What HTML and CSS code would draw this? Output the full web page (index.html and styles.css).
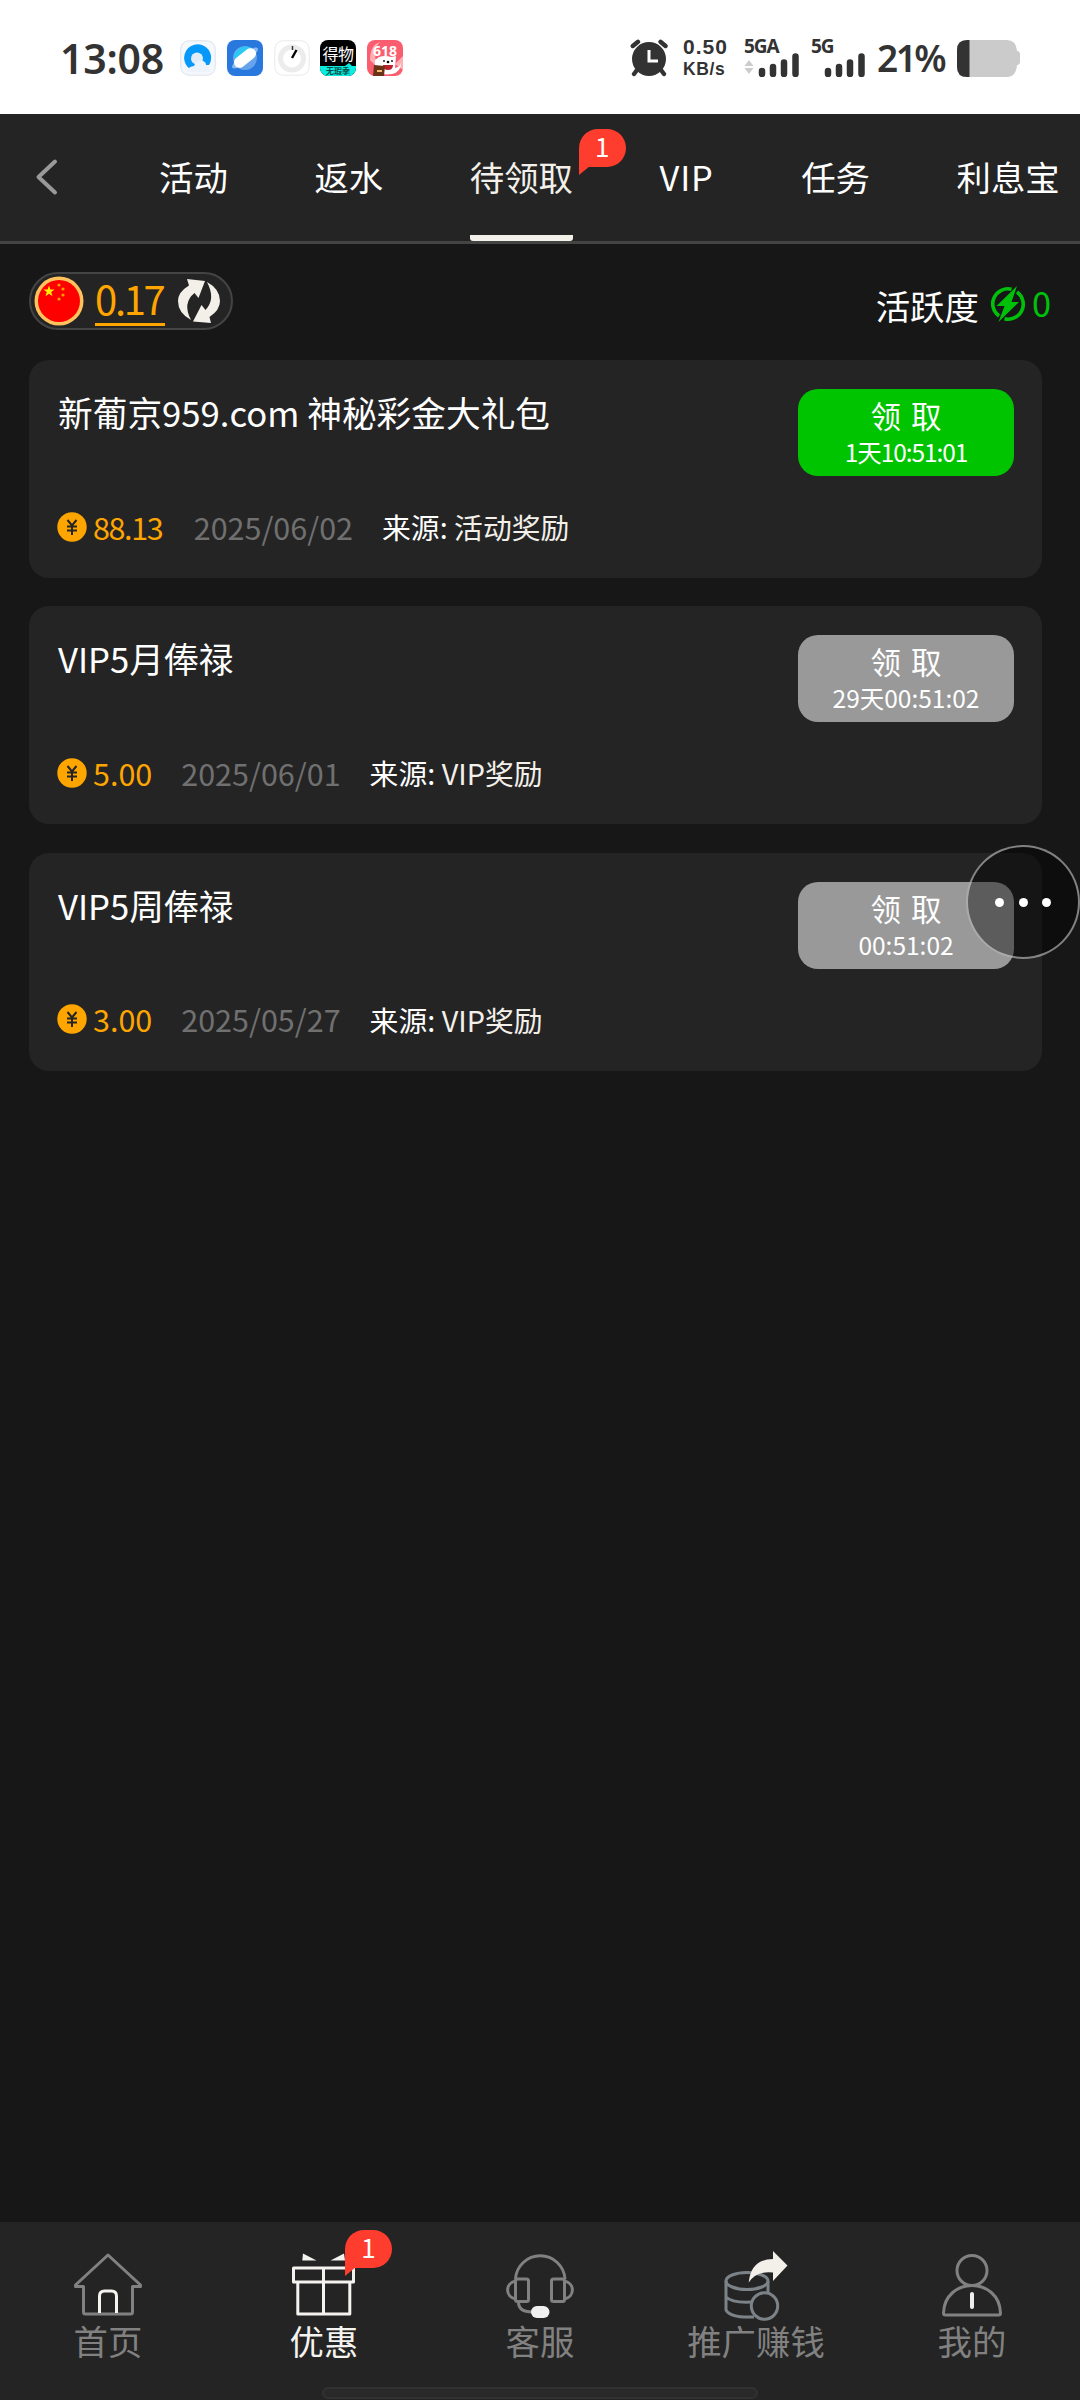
FILE: index.html
```html
<!DOCTYPE html>
<html lang="zh-CN">
<head>
<meta charset="utf-8">
<title>待领取</title>
<link rel="stylesheet" href="styles.css">
</head>
<body>
<div class="status">
  <span class="clock">13:08</span>
  <div class="apps">
    <svg class="app" viewBox="0 0 36 36"><rect x=".8" y=".8" width="34.4" height="34.4" rx="8" fill="#f4f7fc" stroke="#dde2e8"/><path d="M29 25A13.500 13.500 0 1 0 11 29.500L17 25" fill="#0799fa"/><circle cx="17" cy="18.500" r="6" fill="#e2edf8"/><path d="M7 32q0-5 7-6 3-7 9-5 3 1 3 4 5 1 4 7z" fill="#edf3fb"/></svg>
    <svg class="app" viewBox="0 0 36 36"><rect width="36" height="36" rx="8" fill="#2878dd"/><circle cx="18" cy="18" r="12" fill="#65a4ed"/><path d="M7 16A12 12 0 0 1 26 9L9 22z" fill="#2bc8f5"/><ellipse cx="18" cy="18" rx="16" ry="4.500" transform="rotate(-38 18 18)" fill="#8abaf2"/><rect x="5.500" y="12.500" width="25" height="11" rx="5.500" transform="rotate(-38 18 18)" fill="#fff"/></svg>
    <svg class="app" viewBox="0 0 36 36"><rect x=".8" y=".8" width="34.400" height="34.400" rx="8" fill="#fff" stroke="#e9e9e9"/><circle cx="18" cy="18.500" r="11.500" fill="none" stroke="#ececec" stroke-width="5"/><path d="M18.500 6v4" stroke="#333" stroke-width="1.500"/><path d="M18 18l4.500-8" stroke="#000" stroke-width="2.400"/></svg>
    <svg class="app" viewBox="0 0 36 36"><rect width="36" height="36" rx="8" fill="#000"/><path d="M0 26h25l4-3 3 3h4v2a8 8 0 0 1-8 8H8a8 8 0 0 1-8-8z" fill="#08eddd"/><text x="18" y="20" class="logo-main" text-anchor="middle">得物</text><text x="18" y="33.500" class="logo-sub" text-anchor="middle">无瑕季</text></svg>
    <svg class="app" viewBox="0 0 36 36"><rect width="36" height="36" rx="8" fill="#fa5d70"/><path d="M3 20q0-15 10-18-10 10 0 28zM36 16l-8 8 8 6z" fill="#ffb0b5"/><text x="18" y="16" class="logo-618" text-anchor="middle">618</text><path d="M8 20l4-3q6-2 12 0l5-1-1 12q5-1 6-5 0 9-9 11-14 2-17-6z" fill="#fff"/><path d="M16 25h10q0 5-5 5t-5-5" fill="#ba2230"/><circle cx="17" cy="21" r=".9"/><circle cx="25" cy="21" r=".9"/><circle cx="21" cy="22" r="1.300"/><path d="M7 25l11 1-1 10H6z" fill="#6a3217"/><path d="M10 31h5" stroke="#eebf70" stroke-width="2"/></svg>
  </div>
  <div class="system">
    <svg class="alarm" viewBox="0 0 38 38"><g fill="none" stroke="#333" stroke-width="4.400" stroke-linecap="round"><path d="M2.800 7L8 2.800M30.500 2.800L35.500 7M7 31l-3 4M31 31l3 4"/></g><circle cx="19" cy="20" r="17" fill="#333"/><path d="M19 11v11h9" fill="none" stroke="#fff" stroke-width="3"/></svg>
    <div class="speed"><span>0.50</span><span class="unit">KB/s</span></div>
    <div class="signal signal-a"><span>5GA</span><svg viewBox="0 0 55 24"><path d="M5 7l4.500 6H.5zM5 21l4.500-6H.5z" class="traffic"/><path d="M18 18v3M29 14v7M40 9.500v11.500M51.500 3.500V21" class="bars"/></svg></div>
    <div class="signal signal-b"><span>5G</span><svg viewBox="0 0 55 24"><path d="M17 18v3M28 14v7M39 9.500v11.500M50.500 3.500V21" class="bars"/></svg></div>
    <span class="percent">21%</span>
    <svg class="battery" viewBox="0 0 64 37"><path d="M10 0H50q9 0 10 11h1q2 1 2 3v8q0 2-2 3h-1q-1 12-10 12H10Q0 37 0 27V10Q0 0 10 0" fill="#cbcbcb"/><path d="M12.500 0H10Q0 0 0 10v17q0 10 10 10h2.500z" fill="#333"/></svg>
  </div>
</div>

<header class="tabs">
  <svg class="back" viewBox="0 0 24 38"><path d="M20 3.500L3.500 19 20 34.500" fill="none" stroke="#999" stroke-width="4" stroke-linecap="round" stroke-linejoin="round"/></svg>
  <nav class="tab-list">
    <span class="tab">活动</span>
    <span class="tab">返水</span>
    <span class="tab active">待领取<b class="badge">1</b></span>
    <span class="tab vip">VIP</span>
    <span class="tab">任务</span>
    <span class="tab">利息宝</span>
  </nav>
</header>

<section class="summary">
  <div class="balance">
    <svg class="flag" viewBox="0 0 50 50"><circle cx="25" cy="25" r="24.500" fill="#ffc25c"/><circle cx="25" cy="25" r="21" fill="#fe0000"/><path d="M15 9.500l1.400 4h4.200l-3.400 2.500 1.300 4.200-3.500-2.500-3.500 2.500 1.300-4.200L9.400 13.500h4.200z" fill="#ffef00"/><g fill="#ff9b00"><circle cx="25" cy="9" r="1.600"/><circle cx="29" cy="13" r="1.600"/><circle cx="29" cy="19" r="1.600"/><circle cx="25" cy="23" r="1.600"/></g></svg>
    <span class="balance-value">0.17</span>
    <svg class="refresh" viewBox="0 0 44 46"><g fill="#f3f0ea"><path d="M10 1l18 2-6.500 17-4-5Q5 25 14 42 1 35 1 23 1 14 12 7.500z"/><path d="M34 45l-18-1.500L24.500 27l4 5Q39 21 30 4q13 7 13 19 0 9-10.500 16z"/></g></svg>
  </div>
  <div class="activity">
    <span>活跃度</span>
    <svg class="bolt" viewBox="0 0 34 36"><g fill="none" stroke="#00c10a" stroke-width="3.600"><path d="M20.500 3.300A15 15 0 0 0 8 30"/><path d="M26 6A15 15 0 0 1 13.500 32.700"/></g><path d="M26 0L5.500 20h8L7.500 36 28 16h-7.500z" fill="#00c10a"/></svg>
    <span class="activity-value">0</span>
  </div>
</section>

<main class="cards">
  <article class="card">
    <div class="info">
      <h2>新葡京959.com 神秘彩金大礼包</h2>
      <div class="meta"><svg class="coin" viewBox="0 0 30 30"><circle cx="15" cy="15" r="14.700" fill="#ffa500"/><path d="M10.500 8l4.500 5.500L19.500 8M15 13.500v9.500M10 14.500h10M10 18.500h10" fill="none" stroke="#242424" stroke-width="2"/></svg><span class="amount tight">88.13</span><time>2025/06/02</time><span class="source">来源: <em>活动奖励</em></span></div>
    </div>
    <button class="claim ready"><span>领 取</span><small class="short">1天10:51:01</small></button>
  </article>
  <article class="card">
    <div class="info">
      <h2>VIP5月俸禄</h2>
      <div class="meta"><svg class="coin" viewBox="0 0 30 30"><circle cx="15" cy="15" r="14.700" fill="#ffa500"/><path d="M10.500 8l4.500 5.500L19.500 8M15 13.500v9.500M10 14.500h10M10 18.500h10" fill="none" stroke="#242424" stroke-width="2"/></svg><span class="amount">5.00</span><time>2025/06/01</time><span class="source">来源: <em>VIP奖励</em></span></div>
    </div>
    <button class="claim"><span>领 取</span><small>29天00:51:02</small></button>
  </article>
  <article class="card">
    <div class="info">
      <h2>VIP5周俸禄</h2>
      <div class="meta"><svg class="coin" viewBox="0 0 30 30"><circle cx="15" cy="15" r="14.700" fill="#ffa500"/><path d="M10.500 8l4.500 5.500L19.500 8M15 13.500v9.500M10 14.500h10M10 18.500h10" fill="none" stroke="#242424" stroke-width="2"/></svg><span class="amount">3.00</span><time>2025/05/27</time><span class="source">来源: <em>VIP奖励</em></span></div>
    </div>
    <button class="claim"><span>领 取</span><small>00:51:02</small></button>
  </article>
</main>

<div class="floater"><i></i><i></i><i></i></div>

<footer class="bottom">
  <div class="item"><svg viewBox="0 0 72 72"><path d="M36 5L3.500 35v1.500h8V62q0 2 2 2h45q2 0 2-2V36.500h8V35z" class="line"/><path d="M27.500 63V46q0-5 5-5h7q5 0 5 5v17" class="light"/></svg><span>首页</span></div>
  <div class="item on"><svg viewBox="0 0 72 72"><path d="M5.500 18h60v14h-60zM9.800 32h52v32h-52zM35.500 18v46" class="light"/><path d="M15 3.500L28.500 10.500H14.300zM56 3.500L42.500 10.500H57z" fill="#f5f3ef"/></svg><span>优惠</span><b class="badge">1</b></div>
  <div class="item"><svg viewBox="0 0 72 72"><path d="M11.500 29A24.800 24.800 0 0 1 61 29" class="line"/><rect x="11.500" y="29" width="13" height="22.500" rx="2" class="line"/><rect x="47.500" y="29" width="13" height="22.500" rx="2" class="line"/><path d="M11.500 31C1 33 1 47 11.500 49M60.500 31c10.500 2 10.500 16 0 18M14.500 52q0 10 14 10" class="line"/><rect x="27" y="56" width="18.500" height="12" rx="6" fill="#f0f0f0"/></svg><span>客服</span></div>
  <div class="item"><svg viewBox="0 0 72 72"><g class="line steel"><ellipse cx="27" cy="31" rx="21" ry="8.500"/><path d="M6 31v29q4 8 28 7M48 31v12M6 47q6 6 25 5"/><circle cx="44.500" cy="56" r="13.200"/></g><path d="M53 1L67.500 15.500 53 31V22.500Q37 20.500 28.700 32.500 31 9 53 9z" fill="#f3f0ea"/></svg><span>推广赚钱</span></div>
  <div class="item"><svg viewBox="0 0 72 72"><circle cx="36" cy="20.500" r="15" class="line"/><path d="M36 35.500C22 35.500 8 45 7.500 63q0 2 2 2h53q2 0 2-2C64 45 50 35.500 36 35.500z" class="line"/><path d="M36 44v13" stroke="#eee" stroke-width="4" stroke-linecap="round"/></svg><span>我的</span></div>
  <div class="home-bar"></div>
</footer>
</body>
</html>
```
FILE: styles.css
```css
* { box-sizing: border-box; }

body {
  margin: 0;
  width: 1080px;
  height: 2400px;
  display: flex;
  flex-direction: column;
  position: relative;
  overflow: hidden;
  background: #171717;
  color: #fff;
  font: 34.4px/1 "Noto Sans CJK SC", sans-serif;
}

svg { display: block; flex: none; }

/* status bar */
.status {
  height: 114px;
  flex: none;
  display: flex;
  align-items: center;
  padding: 2px 60px 0;
  background: #fff;
  color: #333;
  white-space: nowrap;
}
.clock { width: 120px; font: 600 41px/1 "Noto Sans", sans-serif; letter-spacing: -.2px; }
.apps { display: flex; gap: 10.800px; }
.app { width: 36px; height: 36px; }
.logo-main { font-size: 16px; letter-spacing: -.5px; fill: #fff; }
.logo-sub { font-size: 8px; font-weight: 700; fill: #064b48; }
.logo-618 { font: 700 14px "Noto Sans", sans-serif; fill: #fff; }
.system { margin-left: auto; display: flex; align-items: center; margin-right: -1px; }
.alarm { width: 38px; height: 38px; }
.speed { width: 76px; padding-left: 15px; display: flex; flex-direction: column; gap: 2px; font: 700 21px/20px "Liberation Sans", sans-serif; letter-spacing: 1px; }
.speed .unit { font-size: 17.500px; letter-spacing: .6px; }
.signal { display: flex; flex-direction: column; width: 67px; font: 700 19px/13px "Noto Sans", sans-serif; letter-spacing: -1px; }
.signal-b { width: 66px; }
.signal svg { width: 55px; height: 24px; }
.bars { fill: none; stroke: #333; stroke-width: 6.500; stroke-linecap: round; }
.traffic { fill: #ccc; }
.percent { width: 80px; margin-top: -1px; font: 600 37px/1 "Noto Sans", sans-serif; letter-spacing: -2.500px; }
.battery { width: 64px; height: 37px; }

/* top tabs */
.tabs {
  height: 130px;
  flex: none;
  display: flex;
  background: #242424;
  border-bottom: 3px solid #444;
}
.back { width: 24px; height: 38px; margin: 44px 0 0 35px; }
.tab-list { display: flex; gap: 86.600px; margin-left: 100px; }
.tab { height: 127px; padding-top: 37px; line-height: 50px; position: relative; white-space: nowrap; }
.tab.active { color: #f3f0ea; border-bottom: 6px solid #f3f0ea; border-radius: 3px; }
.tab.vip { width: 55px; letter-spacing: .8px; }

.badge {
  position: absolute;
  width: 47px;
  height: 38px;
  border-radius: 19px 19px 19px 0;
  background: #ff3d2f;
  color: #fff;
  font: 400 26px/34px "Noto Sans CJK SC", sans-serif;
  text-align: center;
}
.badge::after {
  content: "";
  position: absolute;
  left: 0;
  top: 37px;
  border-top: 9px solid #ff3d2f;
  border-right: 11px solid transparent;
}
.tab .badge { left: 109px; top: 15px; }

/* balance row */
.summary { height: 116px; flex: none; display: flex; justify-content: space-between; padding: 28px 29px 0; }
.balance {
  width: 204px;
  height: 58px;
  display: flex;
  align-items: center;
  padding-left: 3px;
  border: 2px solid #444;
  border-radius: 29px;
  background: #242424;
}
.flag { width: 50px; height: 50px; }
.balance-value {
  width: 70px;
  height: 48px;
  margin: 1px 12px 0 11px;
  border-bottom: 3px solid #ffa500;
  color: #ffa500;
  font-size: 40px;
  line-height: 40px;
  letter-spacing: -2.300px;
  white-space: nowrap;
}
.refresh { width: 44px; height: 46px; }
.activity { height: 66px; display: flex; align-items: center; }
.bolt { width: 34px; height: 36px; margin: -3px 7px 0 12px; }
.activity-value { color: #00c10a; margin-top: -5px; }

/* reward cards */
.cards { flex: 1; display: flex; flex-direction: column; gap: 28.300px; padding: 0 38px 0 29px; }
.card {
  height: 218px;
  display: flex;
  justify-content: space-between;
  padding: 29px 28px 28px 28px;
  border-radius: 20px;
  background: #242424;
}
.info { display: flex; flex-direction: column; justify-content: space-between; }
h2 { margin: -2px 0 0 1px; font-size: 34.700px; font-weight: 400; line-height: 50px; white-space: nowrap; }
.meta { height: 43px; display: flex; align-items: center; white-space: nowrap; }
.coin { width: 30px; height: 30px; margin-bottom: 4px; }
.amount { margin: -3px 0 0 6px; font-size: 30.500px; color: #ffa500; }
.amount.tight { letter-spacing: -1.400px; padding-right: 2.500px; }
time { margin: -3px 0 0 29px; font-size: 30.500px; color: #707070; }
.source { margin: -2px 0 0 29px; font-size: 28.800px; }
em { font-style: normal; color: #f3f0ea; }
.claim {
  width: 216px;
  height: 87px;
  display: flex;
  flex-direction: column;
  align-items: center;
  padding: 5px 0 0;
  border: 0;
  border-radius: 20px;
  background: #999;
  color: #fff;
  font: 30.500px/42px "Noto Sans CJK SC", sans-serif;
  word-spacing: 3px;
}
.claim.ready { background: #00c400; }
.claim small { font-size: 24.500px; line-height: 31px; }
.claim .short { letter-spacing: -1.100px; }

/* floating menu handle */
.floater {
  position: absolute;
  left: 966px;
  top: 845px;
  width: 114px;
  height: 114px;
  display: flex;
  align-items: center;
  justify-content: center;
  gap: 14.500px;
  border: 2px solid rgba(255,255,255,.48);
  border-radius: 50%;
  background: rgba(0,0,0,.4);
}
.floater i { width: 9px; height: 9px; border-radius: 50%; background: #fff; }

/* bottom navigation */
.bottom { position: relative; height: 178px; flex: none; display: grid; grid-template-columns: repeat(5, 1fr); background: #242424; color: #818181; }
.item { position: relative; display: flex; flex-direction: column; align-items: center; padding-top: 28px; }
.item svg { width: 72px; height: 72px; }
.item span { margin-top: -2px; line-height: 40px; }
.item.on { color: #f5f3ef; }
.item .badge { left: 129px; top: 8px; }
.line { fill: none; stroke: #818181; stroke-width: 3; stroke-linejoin: round; }
.steel { stroke: #7b8388; }
.light { fill: none; stroke: #f5f3ef; stroke-width: 3; stroke-linejoin: round; }
.home-bar { position: absolute; left: 322px; bottom: 1px; width: 436px; height: 12px; border: 2px solid #313131; border-radius: 6px; background: #292929; }
```
